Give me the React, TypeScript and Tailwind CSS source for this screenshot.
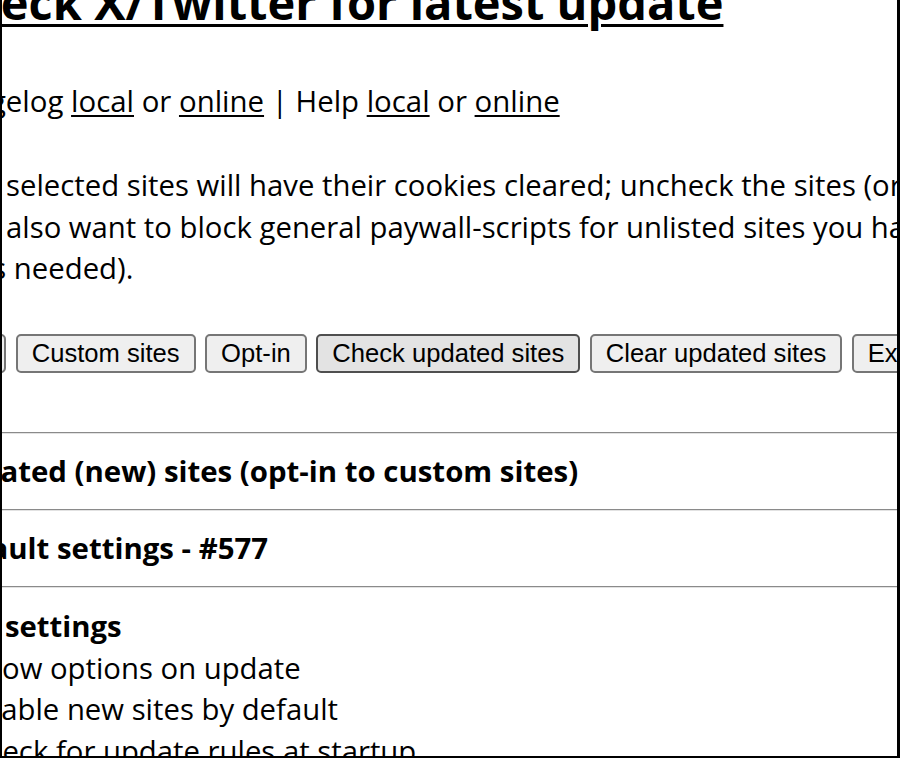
import React from 'react';

const Btn = ({ label, hover = false, className = '' }: { label: string; hover?: boolean; className?: string }) => (
  <button
    className={`shrink-0 h-[39px] px-[14px] rounded-[5px] border-2 text-[25.6px] leading-none text-black whitespace-nowrap font-['Liberation_Sans',Arial,sans-serif] ${
      hover ? 'bg-[#e3e3e3] border-[#4f4f4f]' : 'bg-[#efefef] border-[#767676]'
    } ${className}`}
  >
    {label}
  </button>
);

const Rule = () => <div className="h-[2px] border-t border-t-[#8a8a8a] border-b border-b-[#e2e2e2]" />;

const Section = ({ title, className = '' }: { title: string; className?: string }) => (
  <div className="py-[17px]">
    <div className={`text-[29.4px] leading-[41px] font-bold whitespace-nowrap ${className}`}>{title}</div>
  </div>
);

export default function App() {
  return (
    <div className="w-[900px] h-[758px] overflow-hidden bg-white border-l-2 border-r-[3px] border-b-2 border-black text-black font-['Open_Sans',sans-serif]">
      {/* page scrolled: left part and top are cut off */}
      <h2 className="-mt-[29px] -ml-[62px] text-[47px] leading-[62px] font-bold underline decoration-[3px] underline-offset-[4px] whitespace-nowrap">
        Check X/Twitter for latest update
      </h2>

      <p className="mt-[48px] -ml-[83px] text-[29.4px] leading-[41.5px] whitespace-nowrap">
        Changelog <a className="underline underline-offset-[3px]">local</a> or{' '}
        <a className="underline underline-offset-[3px]">online</a> | Help{' '}
        <a className="underline underline-offset-[3px]">local</a> or{' '}
        <a className="underline underline-offset-[3px]">online</a>
      </p>

      <div className="mt-[42.5px] text-[29.3px] leading-[41.5px] whitespace-nowrap">
        <div className="ml-[4px]">selected sites will have their cookies cleared; uncheck the sites (or disable the extension) for those you have an account for.</div>
        <div className="ml-[4px]">also want to block general paywall-scripts for unlisted sites you have to add them as custom site and enable it</div>
        <div className="-ml-[26px]">as needed).</div>
      </div>

      <div className="mt-[44.5px] flex gap-[9.5px] -ml-[163px]">
        <Btn label="Select none" />
        <Btn label="Custom sites" />
        <Btn label="Opt-in" />
        <Btn label="Check updated sites" hover />
        <Btn label="Clear updated sites" />
        <Btn label="Export options" />
      </div>

      <div className="mt-[59px]">
        <Rule />
        <Section title="Updated (new) sites (opt-in to custom sites)" className="-ml-[61px]" />
        <Rule />
        <Section title="Default settings - #577" className="-ml-[62px]" />
        <Rule />
      </div>

      <div className="mt-[18px] text-[29.3px] leading-[41.5px] whitespace-nowrap">
        <div className="ml-[3px] font-bold">settings</div>
        <div className="-ml-[34px]">Show options on update</div>
        <div className="-ml-[35px]">Enable new sites by default</div>
        <div className="-ml-[36px]">Check for update rules at startup</div>
      </div>
    </div>
  );
}
